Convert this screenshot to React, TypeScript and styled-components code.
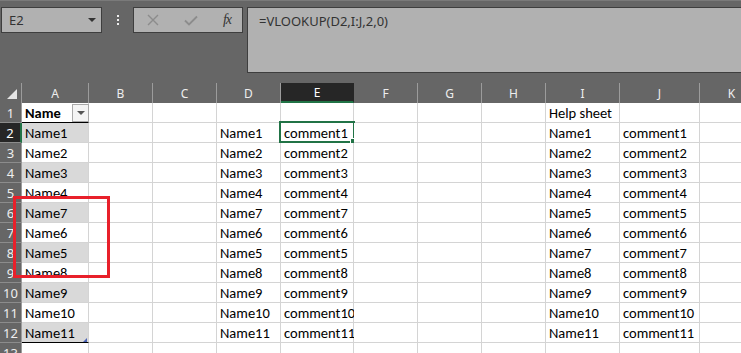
import { FC } from 'react';
import styled, { createGlobalStyle, css } from 'styled-components';

const GlobalStyle = createGlobalStyle`
  html, body {
    margin: 0;
    padding: 0;
    background: #666666;
  }
`;

const COLS = ['A', 'B', 'C', 'D', 'E', 'F', 'G', 'H', 'I', 'J', 'K'];
const WIDTHS = [67, 64, 64, 64, 73, 64, 64, 64, 74, 80, 64];

const listA = ['Name1', 'Name2', 'Name3', 'Name4', 'Name7', 'Name6', 'Name5', 'Name8', 'Name9', 'Name10', 'Name11'];
const help = Array.from({ length: 11 }, (_, i) => i + 1);

// row -> column -> text
const cellText = (row: number, col: string): string => {
  if (row === 1) {
    if (col === 'A') return 'Name';
    if (col === 'I') return 'Help sheet';
    return '';
  }
  const i = row - 2;
  if (i < 0 || i > 10) return '';
  switch (col) {
    case 'A':
    case 'D':
      return listA[i];
    case 'E':
      return listA[i].replace('Name', 'comment');
    case 'I':
      return `Name${help[i]}`;
    case 'J':
      return `comment${help[i]}`;
    default:
      return '';
  }
};

const App: FC = () => {
  const rows = Array.from({ length: 13 }, (_, i) => i + 1);
  return (
    <>
      <GlobalStyle />
      <Shell>
        <FormulaRow>
          <NameBox>
            <span>E2</span>
            <Caret />
          </NameBox>
          <Grip>
            <i />
            <i />
            <i />
          </Grip>
          <FxButtons>
            <svg width="12" height="12" viewBox="0 0 12 12">
              <path d="M1 1 L11 11 M11 1 L1 11" stroke="#8c8c8c" strokeWidth="1.4" />
            </svg>
            <svg width="14" height="11" viewBox="0 0 14 11">
              <path d="M1 5.5 L5 9.5 L13 1.5" stroke="#8c8c8c" strokeWidth="1.8" fill="none" />
            </svg>
            <FxLabel>fx</FxLabel>
          </FxButtons>
          <FormulaInput>=VLOOKUP(D2,I:J,2,0)</FormulaInput>
        </FormulaRow>

        <Sheet>
          <Corner />
          {COLS.map((c) => (
            <ColHead key={c} $active={c === 'E'}>
              {c}
            </ColHead>
          ))}
          {rows.map((r) => (
            <Row key={r} r={r} />
          ))}
        </Sheet>

        <Annotation />
      </Shell>
    </>
  );
};

const Row: FC<{ r: number }> = ({ r }) => (
  <>
    <RowHead $active={r === 2}>{r}</RowHead>
    {COLS.map((c) => {
      const isA = c === 'A';
      return (
        <Cell
          key={c}
          $band={isA && r >= 2 && r <= 12 && r % 2 === 0}
          $head={isA && r === 1}
          $end={isA && r === 12}
        >
          <span>{cellText(r, c)}</span>
          {isA && r === 1 && <FilterButton />}
          {c === 'E' && r === 2 && (
            <Selection>
              <Handle />
            </Selection>
          )}
        </Cell>
      );
    })}
  </>
);

export default App;

const Shell = styled.div`
  position: relative;
  width: 741px;
  height: 353px;
  overflow: hidden;
  background: #666666;
  border-top: 1px solid #7a7a7a;
  box-sizing: border-box;
`;

const FormulaRow = styled.div`
  display: flex;
  align-items: flex-start;
  height: 82px;
  padding: 6px 0 0 1px;
  box-sizing: border-box;
`;

const boxLook = css`
  background: #b1b1b1;
  border: 1px solid #3e3e3e;
  box-sizing: border-box;
`;

const NameBox = styled.div`
  ${boxLook};
  width: 101px;
  height: 26px;
  display: flex;
  align-items: center;
  justify-content: space-between;
  padding: 0 5px 0 7px;
  font-family: 'Noto Sans', sans-serif;
  font-size: 13px;
  color: #333;
`;

const Caret = styled.span`
  width: 0;
  height: 0;
  border-left: 4px solid transparent;
  border-right: 4px solid transparent;
  border-top: 4px solid #333;
`;

const Grip = styled.div`
  width: 31px;
  height: 26px;
  display: flex;
  flex-direction: column;
  align-items: center;
  justify-content: center;
  gap: 2px;

  i {
    display: block;
    width: 2px;
    height: 2px;
    background: #eeeeee;
  }
`;

const FxButtons = styled.div`
  ${boxLook};
  width: 110px;
  height: 26px;
  display: flex;
  align-items: center;
  justify-content: space-between;
  padding: 0 11px 0 13px;
`;

const FxLabel = styled.span`
  font-family: 'Liberation Serif', serif;
  font-style: italic;
  font-size: 14px;
  color: #333;
  letter-spacing: -1px;
`;

const FormulaInput = styled.div`
  ${boxLook};
  flex: 1;
  height: 66px;
  margin-left: 4px;
  margin-right: -2px;
  padding: 4px 11px;
  font-family: 'Noto Sans', sans-serif;
  font-size: 13px;
  color: #333;
`;

const Sheet = styled.div`
  display: grid;
  grid-template-columns: 22px ${WIDTHS.map((w) => `${w}px`).join(' ')};
  grid-auto-rows: 20px;
  background: #ffffff;
`;

const headLook = css`
  background: #666666;
  color: #eeeeee;
  font-family: 'Noto Sans', sans-serif;
  font-size: 12px;
  display: flex;
  align-items: center;
  justify-content: center;
  box-sizing: border-box;
`;

const Corner = styled.div`
  ${headLook};
  position: relative;
  border-right: 1px solid #9c9c9c;

  &::after {
    content: '';
    position: absolute;
    right: 4px;
    bottom: 4px;
    width: 0;
    height: 0;
    border-left: 10px solid transparent;
    border-bottom: 10px solid #e4e4e4;
  }
`;

const ColHead = styled.div<{ $active?: boolean }>`
  ${headLook};
  border-right: 1px solid #9c9c9c;
  ${({ $active }) =>
    $active &&
    css`
      background: #262626;
      color: #ffffff;
      border-bottom: 2px solid #217346;
      border-right-color: #262626;
    `}
`;

const RowHead = styled.div<{ $active?: boolean }>`
  ${headLook};
  font-size: 13px;
  border-bottom: 1px solid #8c8c8c;
  border-right: 1px solid #9c9c9c;
  ${({ $active }) =>
    $active &&
    css`
      background: #262626;
      color: #ffffff;
      border-right: 2px solid #217346;
    `}
`;

const Cell = styled.div<{ $band?: boolean; $head?: boolean; $end?: boolean }>`
  position: relative;
  display: flex;
  align-items: center;
  padding-left: 3px;
  box-sizing: border-box;
  border-right: 1px solid #d4d4d4;
  border-bottom: 1px solid #d4d4d4;
  font-family: 'Carlito', 'Lato', sans-serif;
  font-size: 14.5px;
  color: #000;
  white-space: nowrap;
  background: ${({ $band }) => ($band ? '#d9d9d9' : '#ffffff')};
  ${({ $head }) =>
    $head &&
    css`
      font-weight: 700;
      border-bottom-color: #000;
    `}
  ${({ $end }) =>
    $end &&
    css`
      border-bottom-color: #000;
      &::after {
        content: '';
        position: absolute;
        right: 1px;
        bottom: 0;
        border-left: 4px solid transparent;
        border-bottom: 4px solid #4a63b5;
      }
    `}
`;

const FilterButton = styled.div`
  margin-left: auto;
  align-self: stretch;
  width: 17px;
  margin-right: -1px;
  margin-top: 1px;
  background: #f4f4f4;
  border: 1px solid #a9a9a9;
  box-sizing: border-box;
  display: flex;
  align-items: center;
  justify-content: center;

  &::before {
    content: '';
    border-left: 4px solid transparent;
    border-right: 4px solid transparent;
    border-top: 4px solid #555;
  }
`;

const Selection = styled.div`
  position: absolute;
  left: -2px;
  top: -2px;
  right: -2px;
  bottom: -1px;
  border: 2px solid #217346;
  pointer-events: none;
`;

const Handle = styled.div`
  position: absolute;
  right: -4px;
  bottom: -4px;
  width: 5px;
  height: 5px;
  background: #217346;
  border: 1px solid #ffffff;
`;

const Annotation = styled.div`
  position: absolute;
  left: 13px;
  top: 195px;
  width: 97px;
  height: 82px;
  border: 3px solid #e8202a;
  box-sizing: border-box;
  pointer-events: none;
`;
